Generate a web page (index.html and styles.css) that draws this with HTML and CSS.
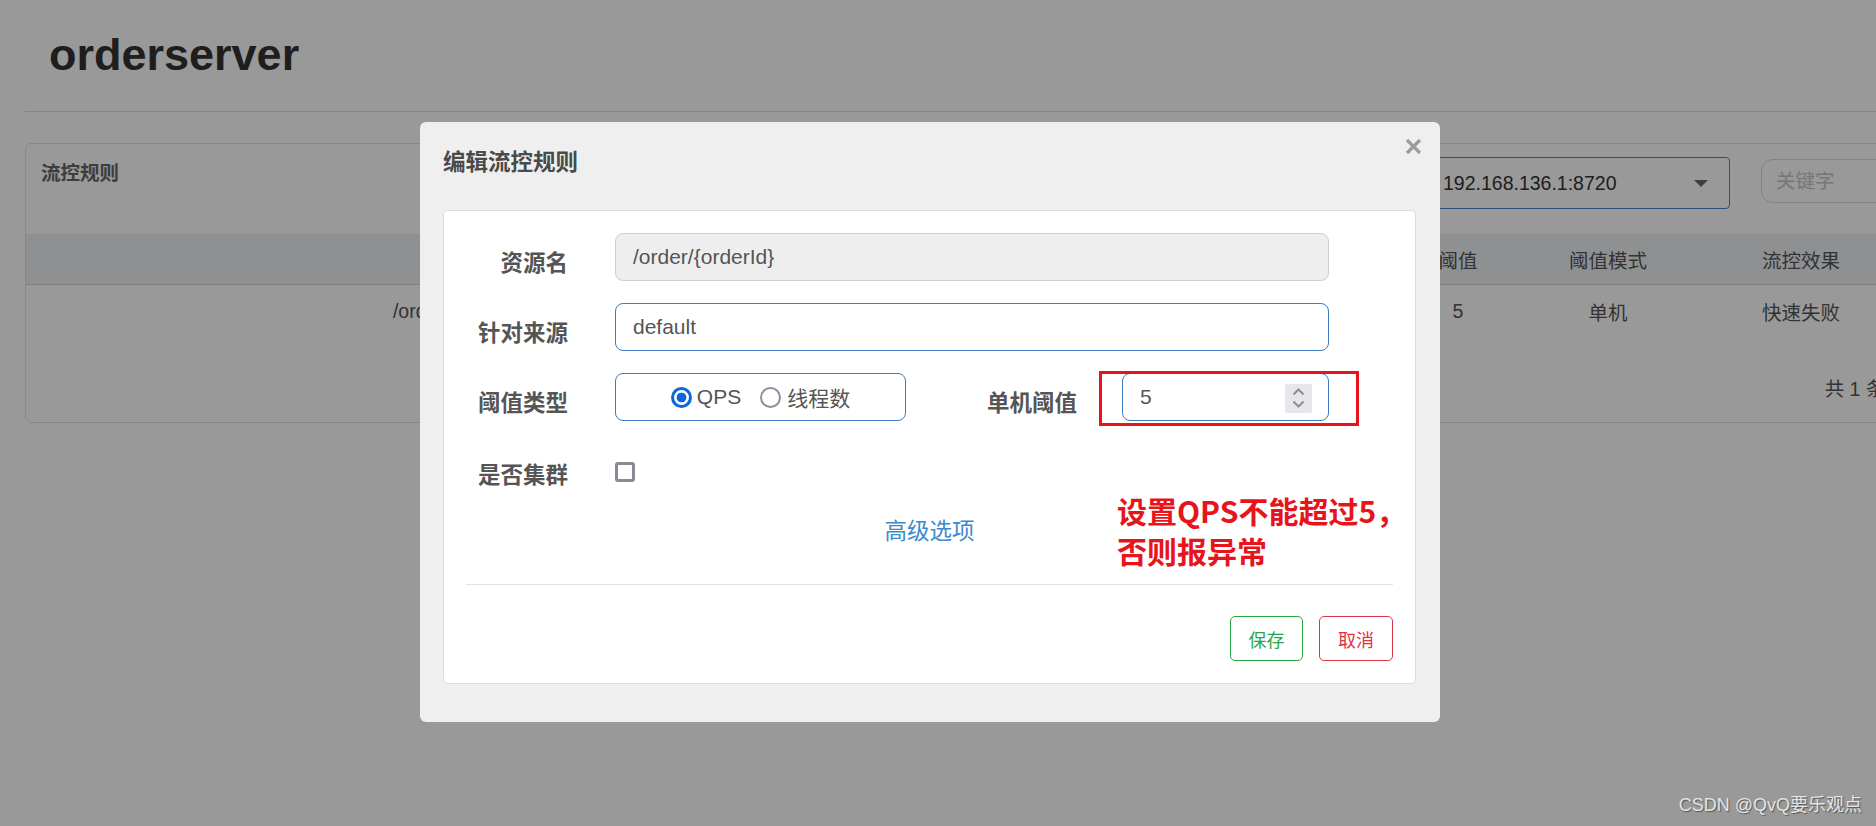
FILE: index.html
```html
<!DOCTYPE html>
<html lang="zh-CN">
<head>
<meta charset="utf-8">
<title>orderserver - 流控规则</title>
<link rel="stylesheet" href="styles.css">
</head>
<body>
<div class="page">
  <header class="page-head"><h1 class="app-title">orderserver</h1></header>
  <section class="card">
    <div class="card-head">
      <h2 class="card-title">流控规则</h2>
      <div class="tools">
        <div class="select"><span>192.168.136.1:8720</span><span class="caret"></span></div>
        <div class="search">关键字</div>
      </div>
    </div>
    <div class="table">
      <div class="tr th">
        <div>资源名</div><div>来源应用</div><div>流控模式</div><div>阈值类型</div><div>阈值</div><div>阈值模式</div><div>流控效果</div><div>操作</div>
      </div>
      <div class="tr tb">
        <div>/order/{orderId}</div><div>default</div><div>直接</div><div>QPS</div><div>5</div><div>单机</div><div>快速失败</div><div>编辑</div>
      </div>
    </div>
    <div class="pager">共 1 条记录, 第 1 / 1 页</div>
  </section>
</div>

<div class="backdrop"></div>

<div class="modal">
  <div class="modal-head">
    <h3 class="modal-title">编辑流控规则</h3>
    <svg class="close" viewBox="0 0 17 17" width="17" height="17"><path d="M2 2 L15 15 M15 2 L2 15" stroke="#9c9c9c" stroke-width="3.2" stroke-linecap="butt" fill="none"/></svg>
  </div>
  <div class="panel">
    <form class="form">
      <div class="row">
        <label class="lbl">资源名</label>
        <input class="ctl ctl-disabled" type="text" value="/order/{orderId}" disabled>
      </div>
      <div class="row">
        <label class="lbl">针对来源</label>
        <input class="ctl" type="text" value="default">
      </div>
      <div class="row row-3">
        <label class="lbl">阈值类型</label>
        <div class="ctl radios">
          <label class="opt"><input class="radio" type="radio" name="grade" checked>QPS</label>
          <label class="opt opt-2"><input class="radio" type="radio" name="grade">线程数</label>
        </div>
        <label class="lbl lbl-2">单机阈值</label>
        <div class="num">
          <input class="ctl" type="number" value="5">
          <span class="spin"><svg viewBox="0 0 27 29" width="27" height="29"><path d="M8.5 10.5 L13.5 5.5 L18.5 10.5 M8.5 17.5 L13.5 22.5 L18.5 17.5" stroke="#8e8e9a" stroke-width="2" fill="none"/></svg></span>
        </div>
      </div>
      <div class="row row-check">
        <label class="lbl">是否集群</label>
        <input class="chk" type="checkbox">
      </div>
      <div class="adv"><a class="adv-link">高级选项</a></div>
    </form>
    <div class="panel-foot">
      <button class="btn btn-save" type="button">保存</button>
      <button class="btn btn-cancel" type="button">取消</button>
    </div>
  </div>
  <div class="note-box"></div>
  <div class="note">设置QPS不能超过5，<br>否则报异常</div>
</div>

<div class="watermark">CSDN @QvQ要乐观点</div>
</body>
</html>
```

FILE: styles.css
```css
* { box-sizing: border-box; }
html, body { margin: 0; }
body {
  position: relative;
  width: 1876px;
  height: 826px;
  overflow: hidden;
  background: #fff;
  color: #555;
  font-family: "Liberation Sans", "Noto Sans CJK SC", sans-serif;
}

/* background page */
.page { padding-left: 25px; width: 2120px; }
.page-head { padding: 30px 0 31px 24px; border-bottom: 1px solid #dedede; }
.app-title { margin: 0; font-size: 45px; line-height: 50px; font-weight: 700; color: #333; }

.card {
  margin-top: 31px;
  width: 2062px;
  border: 1px solid #e3e3e3;
  border-radius: 6px;
  background: #fff;
}
.card-head { display: flex; align-items: flex-start; height: 90px; padding: 0 20px 0 15px; }
.card-title { margin: 14px 0 0; font-size: 19.5px; line-height: 30px; font-weight: 700; color: #666; }
.tools { margin-left: auto; display: flex; gap: 31px; align-items: flex-start; }
.select {
  margin-top: 13px;
  width: 300px;
  height: 52px;
  border: 1px solid #4d84c3;
  border-radius: 4px;
  display: flex;
  align-items: center;
  justify-content: space-between;
  padding: 0 21px 0 12px;
  font-size: 19.5px;
  color: #333;
}
.caret { width: 0; height: 0; border-left: 7px solid transparent; border-right: 7px solid transparent; border-top: 7px solid #6a6a6a; }
.search {
  margin-top: 15px;
  width: 305px;
  height: 44px;
  border: 1px solid #dadada;
  border-radius: 12px;
  padding-left: 14px;
  line-height: 42px;
  font-size: 19.5px;
  color: #c6c6c6;
}

.tr {
  display: grid;
  grid-template-columns: 865px 164px 164px 164px 150px 150px 236px 167px;
  align-items: center;
  text-align: center;
  font-size: 19.5px;
  color: #555;
  white-space: nowrap;
}
.th { height: 51px; background: #eef0f3; border-bottom: 1px solid #d6d6d6; }
.tb { height: 52px; }
.pager { padding: 37px 63px 18px 0; text-align: right; line-height: 30px; font-size: 19.5px; color: #555; white-space: nowrap; }

.backdrop { position: absolute; inset: 0; background: rgba(0, 0, 0, 0.4); }

/* modal */
.modal {
  position: absolute;
  left: 420px;
  top: 122px;
  width: 1020px;
  padding: 0 24px 38px 23px;
  background: #efefef;
  border-radius: 6px;
}
.modal-head { height: 88px; padding-top: 26px; }
.modal-title { margin: 0; font-size: 22.5px; line-height: 30px; font-weight: 700; color: #4a4a4a; }
.close { position: absolute; top: 16px; right: 18px; }

.panel { background: #fff; border: 1px solid #dcdcdc; border-radius: 5px; }
.form { margin: 0; padding-top: 22px; }
.row {
  display: grid;
  grid-template-columns: 171px 1fr;
  height: 48px;
  margin: 0 86px 22px 0;
}
.lbl {
  display: flex;
  justify-content: flex-end;
  align-items: center;
  padding: 8px 47px 0 0;
  font-size: 22.5px;
  font-weight: 700;
  color: #555;
  white-space: nowrap;
}
.ctl {
  width: 100%;
  height: 48px;
  margin: 0;
  border: 1px solid #3d7cc2;
  border-radius: 8px;
  padding: 0 17px;
  font-family: inherit;
  font-size: 21px;
  color: #555;
  background: #fff;
  outline: none;
}
.ctl-disabled { background: #eee; border-color: #cfcfcf; color: #555; -webkit-text-fill-color: #555; opacity: 1; }

.row-3 { grid-template-columns: 171px 291px 216px 1fr; }
.lbl-2 { padding-right: 45px; }
.radios { display: flex; align-items: center; justify-content: center; gap: 19px; padding: 0; }
.opt { display: flex; align-items: center; gap: 5px; font-size: 21px; color: #555; }
.opt-2 { gap: 6px; }
.radio {
  appearance: none;
  -webkit-appearance: none;
  margin: 0;
  width: 21px;
  height: 21px;
  border: 2.5px solid #8f8f9d;
  border-radius: 50%;
  background: #fff;
}
.radio:checked {
  border: 3px solid #0b68dc;
  background: radial-gradient(circle, #0b68dc 0 4.6px, #fff 5.2px);
}
.num { position: relative; }
.num .ctl { -moz-appearance: textfield; }
.num .ctl::-webkit-inner-spin-button,
.num .ctl::-webkit-outer-spin-button { -webkit-appearance: none; margin: 0; }
.spin {
  position: absolute;
  right: 17px;
  top: 11px;
  width: 27px;
  height: 29px;
  background: #e6e6eb;
  border-radius: 2px;
  display: block;
}
.spin svg { display: block; }

.row-check { height: 58px; margin-bottom: 0; align-items: center; }
.row-check .lbl { padding-top: 1px; height: 100%; }
.chk {
  appearance: none;
  -webkit-appearance: none;
  margin: 0;
  width: 20px;
  height: 20px;
  border: 3px solid #8a8a96;
  border-radius: 3px;
  background: #fff;
}

.adv { margin-top: 14px; height: 34px; line-height: 34px; text-align: center; font-size: 22.5px; }
.adv-link { color: #3c8acb; text-decoration: none; }

.panel-foot {
  display: flex;
  justify-content: flex-end;
  gap: 16px;
  margin: 35px 22px 0;
  padding: 31px 0 22px;
  border-top: 1px solid #e3e3e3;
}
.btn {
  height: 45px;
  width: 73px;
  margin: 0;
  border-radius: 5px;
  background: #fff;
  border: 1.5px solid;
  font-family: inherit;
  font-size: 18px;
  padding: 0;
}
.btn-save { color: #28a745; border-color: #28a745; }
.btn-cancel { width: 74px; color: #dc3545; border-color: #dc3545; }

.note-box {
  position: absolute;
  left: 679px;
  top: 249px;
  width: 260px;
  height: 55px;
  border: 3px solid #e8141c;
}
.note {
  position: absolute;
  left: 697px;
  top: 368px;
  font-family: "Noto Sans CJK SC", sans-serif;
  font-size: 30px;
  line-height: 40px;
  font-weight: 700;
  color: #e8141c;
  white-space: nowrap;
}

.watermark {
  position: absolute;
  right: 14px;
  bottom: 10px;
  font-size: 18px;
  color: #e4e4e4;
  text-shadow: 1px 1px 1px #555;
  white-space: nowrap;
}
```
